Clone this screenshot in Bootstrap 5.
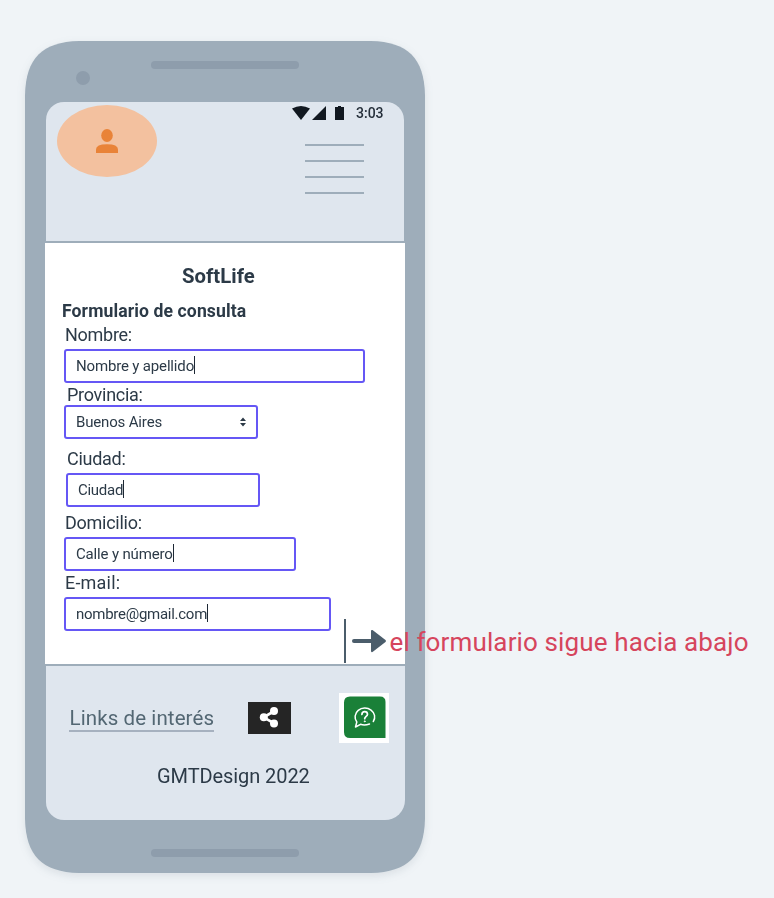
<!DOCTYPE html>
<html lang="es">
<head>
<meta charset="utf-8">
<meta name="viewport" content="width=device-width, initial-scale=1">
<title>SoftLife</title>
<link href="https://cdn.jsdelivr.net/npm/bootstrap@5.3.0/dist/css/bootstrap.min.css" rel="stylesheet">
<style>
body{background:#f0f4f7;color:#2c3a47;font-family:Roboto,"Liberation Sans",sans-serif;min-height:898px}
.phone-wrap{width:400px;margin:41px 0 0 25px;filter:drop-shadow(0 3px 4px rgba(60,80,100,.12))}
.phone{height:832px;background:#9eadba;padding:0 20px;clip-path:path("M0 54C1 17 17 1 54 0H346C383 1 399 17 400 54V778C399 815 383 831 346 832H54C17 831 1 815 0 778Z")}
.bezel-top{height:61px}
.speaker{width:148px;height:8px;border-radius:4px;background:#8e9dac}
.bezel-top .speaker{margin:20px 0 0 61px}
.camera{width:14px;height:14px;background:#8e9dac;margin:30px 0 0 31px}
.bezel-bottom{padding-top:29px}
.app-top{height:141px;margin:0 1px;background:#dfe6ee;border-bottom:2px solid #9eadba;border-radius:18px 18px 0 0;padding:3px 20px 0 11px}
.avatar{width:100px;height:72px;background:#f3c19f;border-radius:50%}
.status{height:18px;font-size:14px;font-weight:500;line-height:16px;color:#252f3a}
.clock{width:28px;margin:-2px 0 0 11px}
.status svg{margin-top:-2px}
.menu-lines{width:59px;margin:21px 20px 0 0}
.menu-lines i{height:2px;background:#9eadba;margin-bottom:14px}
.app-form{height:421px;padding:17px 19px 0}
.title{font-size:20.3px;line-height:32px;font-weight:700;padding-left:118px;letter-spacing:.06px}
.sub{font-size:17.6px;line-height:24px;font-weight:700;margin:7px 0 0 -2px;letter-spacing:.1px}
.lbl{font-size:18px;padding-left:1px;letter-spacing:-.27px}
.wider{letter-spacing:.2px}
.h26{height:26px;line-height:24px}.h22{height:22px;line-height:24px}.h34{height:34px;line-height:40px}.h30{height:30px;line-height:32px}
.field{height:34px;border:2px solid #6557f5;border-radius:3px;padding:0 10px;font-size:15px;background:#fff;letter-spacing:-.16px}
.tight{letter-spacing:-.27px}
.caret{width:1px;height:18px;background:#1d2834;margin-top:-2px}
.w301{width:301px}.w194{width:194px}.w232{width:232px}.w267{width:267px}
.shift{margin-left:2px}
.app-bottom{height:156px;margin-left:1px;background:#dfe6ee;border-top:2px solid #9eadba;border-radius:0 0 20px 18px}
.links{width:145px;height:26px;font-size:20.5px;line-height:24px;letter-spacing:.1px;padding-left:.5px;color:#536773;border-bottom:2px solid #a6b1bf;margin:40px 0 0 23px}
.share{width:43px;height:32px;background:#252525;margin:36px 0 0 34px}
.help{width:50px;height:50px;margin:27px 0 0 48px}
.credit{font-size:20px;line-height:24px;margin:21px 0 0 111px;letter-spacing:-.08px}
.note{position:absolute;left:344px;top:619px;height:44px}
.note-bar{width:2px;height:44px;background:#4b5d6b}
.note-arrow{margin:10px 0 0 6px}
.note-text{font-size:26px;line-height:44px;letter-spacing:.13px;color:#d6455d;margin-left:2.500px;padding-top:1px}
</style>
<script src="https://cdn.jsdelivr.net/npm/bootstrap@5.3.0/dist/js/bootstrap.bundle.min.js"></script>
</head>
<body>
<main class="overflow-hidden pb-4">
<div class="phone-wrap">
<div class="phone">
  <div class="bezel-top d-flex align-items-start"><div class="camera rounded-circle"></div><div class="speaker"></div></div>
  <header class="app-top d-flex justify-content-between">
    <div class="avatar d-flex align-items-center justify-content-center">
      <svg width="22" height="24" viewBox="0 0 22 24" fill="#e98338"><ellipse cx="11" cy="6.500" rx="5.800" ry="6.500"/><path d="M0 24v-3.500Q0 15.200 11 15.200T22 20.500V24z"/></svg>
    </div>
    <div class="d-flex flex-column align-items-end">
      <div class="status d-flex align-items-center">
        <svg width="53" height="14" viewBox="0 0 53 14" fill="#111820"><path d="M0 2.500Q9 -2.500 18 2.500L9 14z"/><path d="M34 0v14H20z"/><path d="M43 1h3V0h3v1h3v13h-9z"/></svg>
        <span class="clock text-nowrap">3:03</span>
      </div>
      <div class="menu-lines"><i class="d-block"></i><i class="d-block"></i><i class="d-block"></i><i class="d-block"></i></div>
    </div>
  </header>
  <section class="app-form bg-white">
    <div class="title">SoftLife</div>
    <div class="sub">Formulario de consulta</div>
    <div class="lbl h26">Nombre:</div>
    <div class="field w301 d-flex align-items-center"><span>Nombre y apellido</span><i class="caret"></i></div>
    <div class="lbl h22 shift">Provincia:</div>
    <div class="field w194 d-flex align-items-center justify-content-between"><span>Buenos Aires</span>
      <svg width="6" height="10" viewBox="0 0 6 10" fill="#2c3a47"><path d="M0 4L3 .500L6 4zM0 6h6L3 9.500z"/></svg></div>
    <div class="lbl h34 shift">Ciudad:</div>
    <div class="field tight w194 shift d-flex align-items-center"><span>Ciudad</span><i class="caret"></i></div>
    <div class="lbl h30">Domicilio:</div>
    <div class="field w232 d-flex align-items-center"><span>Calle y número</span><i class="caret"></i></div>
    <div class="lbl wider h26">E-mail:</div>
    <div class="field tight w267 d-flex align-items-center"><span>nombre@gmail.com</span><i class="caret"></i></div>
  </section>
  <footer class="app-bottom">
    <div class="d-flex align-items-start">
      <a class="links d-block text-decoration-none text-nowrap">Links de interés</a>
      <div class="share d-flex">
        <svg width="43" height="32" viewBox="0 0 43 32" fill="#fff"><path d="M26.500 9L15.500 15.300L26.500 21.500" fill="none" stroke="#fff" stroke-width="2.600"/><circle cx="26" cy="9" r="4"/><circle cx="15.800" cy="15.300" r="4"/><circle cx="26" cy="21.500" r="4"/></svg>
      </div>
      <div class="help bg-white d-flex">
        <svg width="50" height="50" viewBox="0 0 50 50" fill="none" stroke="#fff" stroke-linecap="round" stroke-linejoin="round"><path d="M11 3.500H41Q46.500 3.500 46.500 9V45H11Q5 45 5 39V9.500Q5 3.500 11 3.500z" fill="#1a8038" stroke="none"/><path d="M34.300 28.500A9.800 8.900 0 1 0 17.800 29L16.500 34L21.500 31.300Q25.500 32.800 30.500 31" stroke-width="1.500"/><path d="M22.900 21.500Q23 18.700 25.700 18.700T28.500 21.300C28.500 23.300 25.700 23.500 25.700 25.700" stroke-width="1.700"/><circle cx="25.700" cy="28.300" r=".6" fill="#fff" stroke-width=".6"/></svg>
      </div>
    </div>
    <div class="credit">GMTDesign 2022</div>
  </footer>
  <div class="bezel-bottom d-flex justify-content-center"><div class="speaker"></div></div>
</div>
</div>
<div class="note d-flex align-items-start text-nowrap">
  <div class="note-bar"></div>
  <svg class="note-arrow" width="35" height="24" viewBox="0 0 35 24" fill="#4b5d6b"><path d="M2 12H22" stroke="#4b5d6b" stroke-width="4" stroke-linecap="round"/><path d="M19 2Q19 .500 20.500 1L33.500 11Q34.500 12 33.500 13L20.500 23Q19 23.500 19 22z"/></svg>
  <div class="note-text">el formulario sigue hacia abajo</div>
</div>
</main>
</body>
</html>
